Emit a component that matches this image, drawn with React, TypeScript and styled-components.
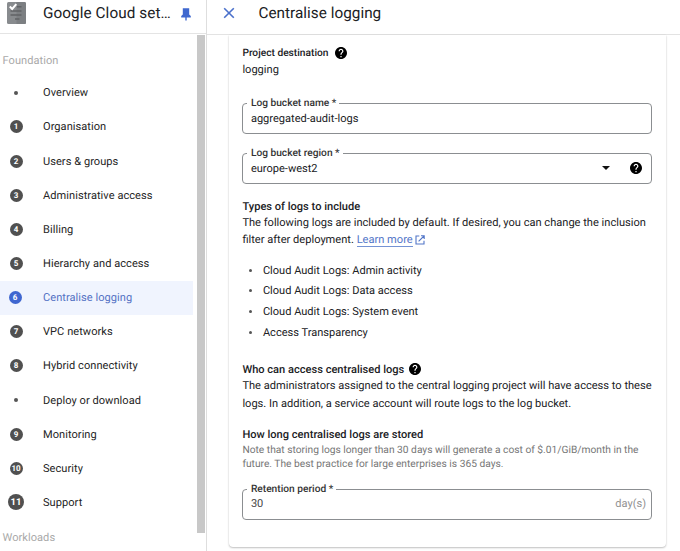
import React from "react";
import styled, { createGlobalStyle, css } from "styled-components";

const GlobalStyle = createGlobalStyle`
  * { box-sizing: border-box; }
  body { margin: 0; background: #fff; overflow: hidden; font-family: Roboto, sans-serif; color: #202124; text-rendering: geometricPrecision; }
`;

const Page = styled.div`
  display: flex;
  width: 680px;
  height: 551px;
  overflow: hidden;
`;

const Sidebar = styled.aside`
  display: flex;
  flex-direction: column;
  width: 207px;
  flex: none;
  border-right: 1px solid #dedede;
`;

const SideHeader = styled.header`
  display: flex;
  align-items: center;
  height: 34px;
  flex: none;
  padding: 0 0 7px 6.5px;
  border-bottom: 1px solid #e4e4e4;
`;

const Product = styled.div`
  width: 130px;
  margin-left: 17.5px;
  font-size: 15.3px;
  line-height: 20px;
  letter-spacing: 0.07px;
  white-space: nowrap;
`;

const Pin = styled.svg`
  display: block;
  margin: 2px 0 0 7.5px;
`;

const SideBody = styled.div`
  display: flex;
  flex: 1;
  min-height: 0;
`;

const Nav = styled.nav`
  width: 193px;
  overflow: hidden;
  padding-top: 17.5px;
`;

const ScrollThumb = styled.div`
  width: 8px;
  height: 498px;
  margin: 1px 0 0 4px;
  background: #c8c8c8;
`;

const Group = styled.div`
  height: 18px;
  padding-left: 2.5px;
  font-size: 11.05px;
  line-height: 18px;
  letter-spacing: 0.05px;
  color: #a9a9a9;
`;

const Items = styled.div`
  padding: 6.2px 0 9.8px;
`;

const Item = styled.div<{ $active?: boolean }>`
  display: flex;
  align-items: center;
  height: 34.15px;
  font-size: 11.05px;
  letter-spacing: 0.05px;
  white-space: nowrap;
  color: ${(p) => (p.$active ? "#5472c4" : "#252525")};
  background: ${(p) => (p.$active ? "#f0f4fe" : "transparent")};
`;

const Marker = styled.span<{ $active?: boolean }>`
  display: flex;
  justify-content: center;
  width: 43px;
  padding-right: ${(p) => (p.$active ? "13px" : "11px")};
`;

const Badge = styled.span<{ $active?: boolean; $large?: boolean }>`
  display: flex;
  align-items: center;
  justify-content: center;
  flex: none;
  width: ${(p) => (p.$large ? 16 : 13)}px;
  height: ${(p) => (p.$large ? 16 : 13)}px;
  border-radius: 50%;
  background: ${(p) => (p.$active ? "#3f66d0" : "#505050")};
  color: #fff;
  font-size: ${(p) => (p.$large ? 9.5 : 8)}px;
  font-weight: 700;
  letter-spacing: 0;
`;

const Dot = styled.span<{ $size: number }>`
  width: ${(p) => p.$size}px;
  height: ${(p) => p.$size}px;
  border-radius: 50%;
  background: #555;
`;

const Main = styled.main`
  flex: 1;
  min-width: 0;
`;

const MainHeader = styled.header`
  display: flex;
  align-items: center;
  height: 35px;
  padding: 0 0 8px 16px;
  border-bottom: 1px solid #e3e3e3;
`;

const Title = styled.h1`
  margin: 0 0 0 23.5px;
  font-size: 15.3px;
  line-height: 20px;
  font-weight: 400;
  letter-spacing: 0.02px;
`;

const Card = styled.section`
  width: 437px;
  height: 512px;
  margin-left: 22px;
  padding: 9.5px 14px 0 13.4px;
  border-radius: 0 0 4px 4px;
  box-shadow: 0 1px 2px rgba(0, 0, 0, 0.24), 0 0 1px rgba(0, 0, 0, 0.12);
`;

const Heading = styled.h2<{ $small?: boolean; $top?: number }>`
  display: flex;
  align-items: center;
  gap: ${(p) => (p.$small ? 6.5 : 5)}px;
  height: ${(p) => (p.$small ? 18 : 16)}px;
  margin: ${(p) => p.$top ?? 0}px 0 0;
  font-size: ${(p) => (p.$small ? 10.2 : 11.08)}px;
  font-weight: 500;
  white-space: nowrap;
`;

const Text = styled.p<{ $line: number }>`
  margin: 0;
  font-size: 11.08px;
  line-height: ${(p) => p.$line}px;
  white-space: nowrap;
`;

const Note = styled.p`
  margin: 1px 0 0;
  font-size: 10.22px;
  line-height: 14px;
  color: #767676;
  white-space: nowrap;
`;

const Link = styled.a`
  display: inline-flex;
  align-items: center;
  gap: 2px;
  color: #5276c8;
`;

const LinkText = styled.span`
  height: 15px;
  line-height: 15px;
  border-bottom: 1px solid #7593d4;
`;

const List = styled.ul`
  margin: 12px 0 0;
  padding: 0 0 0 7px;
  list-style: none;
`;

const ListItem = styled.li`
  display: flex;
  align-items: center;
  gap: 10.5px;
  height: 20.6px;
  font-size: 11.05px;
`;

const Field = styled.fieldset<{ $top: number }>`
  height: 36px;
  min-width: 0;
  margin: ${(p) => p.$top - 5}px 0 0;
  padding: 0 5px 0 3.5px;
  border: 1px solid #8b8e91;
  border-radius: 4px;
`;

const Legend = styled.legend`
  height: 11px;
  padding: 0 3px 0 4px;
  font-size: 10.2px;
  line-height: 11.4px;
  font-weight: 500;
  color: #333;
`;

const FieldRow = styled.div<{ $muted?: boolean }>`
  display: flex;
  align-items: center;
  height: 18px;
  padding-left: 4px;
  font-size: 11.05px;
  ${(p) =>
    p.$muted &&
    css`
      color: #444;
    `}
`;

const Spacer = styled.span`
  flex: 1;
`;

const Caret = styled.span`
  width: 0;
  height: 0;
  margin-right: 19.5px;
  border: 4px solid transparent;
  border-top: 4.5px solid #111;
  border-bottom: 0;
`;

const TrailingHelp = styled.span`
  margin-right: 4.5px;
`;

const Suffix = styled.span`
  color: #929292;
`;

const HelpSvg = styled.svg`
  display: block;
  flex: none;
  margin-bottom: 1px;
`;

const HelpIcon = () => (
  <HelpSvg width="12" height="12" viewBox="2 2 20 20">
    <path
      fill="#000"
      d="M12 2C6.48 2 2 6.48 2 12s4.48 10 10 10 10-4.48 10-10S17.52 2 12 2zm1 17h-2v-2h2v2zm2.07-7.75l-.9.92C13.45 12.9 13 13.5 13 15h-2v-.5c0-1.1.45-2.1 1.17-2.83l1.24-1.26c.37-.36.59-.86.59-1.41 0-1.1-.9-2-2-2s-2 .9-2 2H8c0-2.21 1.79-4 4-4s4 1.79 4 4c0 .88-.36 1.68-.93 2.25z"
    />
  </HelpSvg>
);

const ChecklistLogo = () => (
  <svg width="19" height="22" viewBox="0 0 19 22">
    <rect width="19" height="22" rx="1.5" fill="#888b8e" />
    <path d="M9.5 0h8A1.5 1.5 0 0 1 19 1.5v19a1.5 1.5 0 0 1-1.5 1.5h-8z" fill="#7c7f82" />
    <path d="M10 4.8h4.500M3.500 9h11M3.500 13h11M8 17h4.500" stroke="#606366" strokeWidth="1.400" />
    <path d="M2.800 4.500l2.400 2.500L9.300 2.200" fill="none" stroke="#fff" strokeWidth="2" />
  </svg>
);

const items: { label: string; mark?: number }[] = [
  { label: "Overview" },
  { label: "Organisation", mark: 1 },
  { label: "Users & groups", mark: 2 },
  { label: "Administrative access", mark: 3 },
  { label: "Billing", mark: 4 },
  { label: "Hierarchy and access", mark: 5 },
  { label: "Centralise logging", mark: 6 },
  { label: "VPC networks", mark: 7 },
  { label: "Hybrid connectivity", mark: 8 },
  { label: "Deploy or download" },
  { label: "Monitoring", mark: 9 },
  { label: "Security", mark: 10 },
  { label: "Support", mark: 11 },
];

const logs = [
  "Cloud Audit Logs: Admin activity",
  "Cloud Audit Logs: Data access",
  "Cloud Audit Logs: System event",
  "Access Transparency",
];

export default function App() {
  return (
    <Page>
      <GlobalStyle />
      <Sidebar>
        <SideHeader>
          <ChecklistLogo />
          <Product>Google Cloud set…</Product>
          <Pin width="10" height="13" viewBox="0 0 10 13">
            <path d="M1.800 0.300h6.400v6.200L9.800 8v1.400H5.700V12.600H4.300V9.400H0.200V8l1.600-1.500z" fill="#3f68cf" />
          </Pin>
        </SideHeader>
        <SideBody>
          <Nav>
            <Group>Foundation</Group>
            <Items>
              {items.map(({ label, mark }) => {
                const active = mark === 6;
                return (
                  <Item key={label} $active={active}>
                    <Marker $active={active}>
                      {mark ? (
                        <Badge $active={active} $large={mark === 11}>
                          {mark}
                        </Badge>
                      ) : (
                        <Dot $size={4} />
                      )}
                    </Marker>
                    {label}
                  </Item>
                );
              })}
            </Items>
            <Group>Workloads</Group>
          </Nav>
          <ScrollThumb />
        </SideBody>
      </Sidebar>
      <Main>
        <MainHeader>
          <svg width="12" height="12" viewBox="0 0 12 12">
            <path d="M1.200 1.200l9.600 9.600M10.800 1.200L1.200 10.800" stroke="#4a70cb" strokeWidth="1.600" />
          </svg>
          <Title>Centralise logging</Title>
        </MainHeader>
        <Card>
          <Heading $small>
            Project destination <HelpIcon />
          </Heading>
          <Text $line={14}>logging</Text>
          <Field $top={26.5}>
            <Legend>Log bucket name *</Legend>
            <FieldRow>aggregated-audit-logs</FieldRow>
          </Field>
          <Field $top={19}>
            <Legend>Log bucket region *</Legend>
            <FieldRow>
              europe-west2
              <Spacer />
              <Caret />
              <TrailingHelp>
                <HelpIcon />
              </TrailingHelp>
            </FieldRow>
          </Field>
          <Heading $top={14}>Types of logs to include</Heading>
          <Text $line={17}>
            The following logs are included by default. If desired, you can change the inclusion
            <br />
            filter after deployment.{" "}
            <Link>
              <LinkText>Learn more</LinkText>
              <svg width="10" height="10" viewBox="0 0 10 10" fill="none" stroke="#5276c8" strokeWidth="1.100">
                <path d="M4.300 1H1v8h8V5.700M6 .8h3.200V4M9 1L3.600 6.400" />
              </svg>
            </Link>
          </Text>
          <List>
            {logs.map((log) => (
              <ListItem key={log}>
                <Dot $size={3} />
                {log}
              </ListItem>
            ))}
          </List>
          <Heading $top={19}>
            Who can access centralised logs <HelpIcon />
          </Heading>
          <Text $line={17.5}>
            The administrators assigned to the central logging project will have access to these
            <br />
            logs. In addition, a service account will route logs to the log bucket.
          </Text>
          <Heading $top={14.2}>How long centralised logs are stored</Heading>
          <Note>
            Note that storing logs longer than 30 days will generate a cost of $.01/GiB/month in the
            <br />
            future. The best practice for large enterprises is 365 days.
          </Note>
          <Field $top={17.4}>
            <Legend>Retention period *</Legend>
            <FieldRow $muted>
              30
              <Spacer />
              <Suffix>day(s)</Suffix>
            </FieldRow>
          </Field>
        </Card>
      </Main>
    </Page>
  );
}
